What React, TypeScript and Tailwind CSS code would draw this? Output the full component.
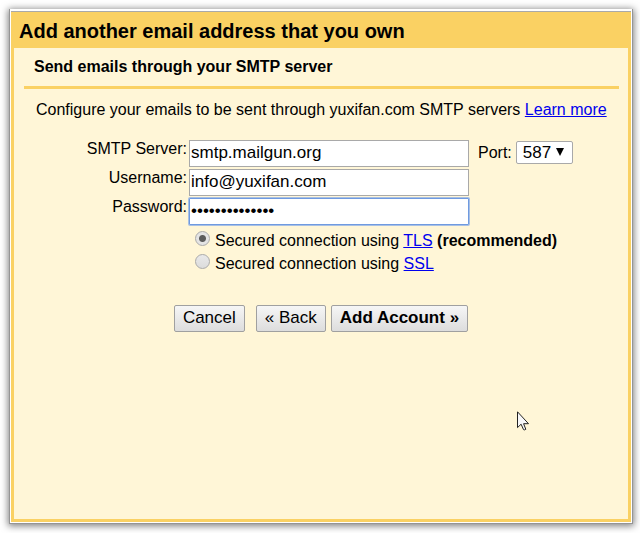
import { useState } from "react";

const buttonClass =
  "h-[27px] rounded-[2px] border border-[#a0a0a0] bg-gradient-to-b from-[#f6f6f6] to-[#dddddd] px-2 pb-px text-[17px] leading-5";
const inputClass = "h-[27px] w-full min-w-0 border bg-white px-px pb-px text-[17px] outline-none";
const linkClass = "text-[#0000ee] underline";
const radioClass =
  "size-[15px] shrink-0 appearance-none rounded-full border border-[#aaaaaa] bg-gradient-to-b from-[#e9e9e9] to-[#dcdcdc] checked:bg-[radial-gradient(circle,#5c5c5c_3px,#e4e4e4_4px)]";

export default function App() {
  const [server, setServer] = useState("smtp.mailgun.org");
  const [username, setUsername] = useState("info@yuxifan.com");
  const [password, setPassword] = useState("mailgunsecret1");
  const [security, setSecurity] = useState("tls");

  return (
    <div className="flex min-h-screen flex-col bg-white pt-[9px] pr-[7px] pb-[9px] pl-[9px] font-['Liberation_Sans',Arial,sans-serif] text-base text-black">
      <div className="flex grow flex-col border-x border-b border-[#959595] bg-white pt-[2px] pb-px shadow-[0_1px_7px_1px_rgba(0,0,0,0.5)]">
        <main className="mr-px ml-px flex grow flex-col border-t border-[#a9a9a9] bg-[#fad163] px-[3px] pb-[3px]">
          <h1 className="h-9 pt-[5px] pl-[5px] text-xl leading-7 font-bold">
            Add another email address that you own
          </h1>
          <form className="grow bg-[#fff6d7] pb-4" onSubmit={(e) => e.preventDefault()}>
            <h2 className="mr-[9px] ml-[10px] h-[41px] border-b-3 border-[#fad163] pt-[9px] pl-[10px] leading-5 font-bold">
              Send emails through your SMTP server
            </h2>
            <p className="pt-[11px] pl-[22px] leading-5">
              Configure your emails to be sent through yuxifan.com SMTP servers{" "}
              <a href="#learn-more" className={linkClass}>Learn more</a>
            </p>

            <div className="mt-5 grid grid-cols-[173px_280px_auto] justify-start gap-x-[2px] gap-y-[2px]">
              <label htmlFor="server" className="text-right leading-[18px]">SMTP Server:</label>
              <input
                id="server"
                className={`${inputClass} border-[#a9a9a9]`}
                value={server}
                onChange={(e) => setServer(e.target.value)}
              />
              <div className="flex items-center gap-1 pb-[2px] pl-[7px]">
                <label htmlFor="port">Port:</label>
                <div className="relative">
                  <select
                    id="port"
                    defaultValue="587"
                    className="block h-[23px] w-[57px] appearance-none rounded-[2px] border border-[#a9a9a9] bg-white pl-[6px] text-[17px] leading-5"
                  >
                    <option>25</option>
                    <option>465</option>
                    <option>587</option>
                  </select>
                  <svg
                    className="pointer-events-none absolute top-[7px] right-[9px] size-2"
                    viewBox="0 0 8 8"
                    aria-hidden="true"
                  >
                    <path d="M0 0h8L4 8z" />
                  </svg>
                </div>
              </div>

              <label htmlFor="username" className="text-right leading-[18px]">Username:</label>
              <input
                id="username"
                className={`${inputClass} border-[#a9a9a9]`}
                value={username}
                onChange={(e) => setUsername(e.target.value)}
              />
              <span />

              <label htmlFor="password" className="text-right leading-[18px]">Password:</label>
              <input
                id="password"
                type="password"
                className={`${inputClass} rounded-[1px] border-[#6f9ae0] shadow-[0_0_0_1px_#a8c0e4]`}
                value={password}
                onChange={(e) => setPassword(e.target.value)}
              />
            </div>

            <div className="mt-1 pl-[181px] leading-[23px]">
              <div className="flex gap-[5px]">
                <input
                  id="tls"
                  type="radio"
                  name="security"
                  className={`${radioClass} mt-[2px]`}
                  checked={security === "tls"}
                  onChange={() => setSecurity("tls")}
                />
                <label htmlFor="tls">
                  Secured connection using <a href="#tls" className={linkClass}>TLS</a>{" "}
                  <b>(recommended)</b>
                </label>
              </div>
              <div className="flex gap-[5px]">
                <input
                  id="ssl"
                  type="radio"
                  name="security"
                  className={`${radioClass} mt-[2px]`}
                  checked={security === "ssl"}
                  onChange={() => setSecurity("ssl")}
                />
                <label htmlFor="ssl">
                  Secured connection using <a href="#ssl" className={linkClass}>SSL</a>
                </label>
              </div>
            </div>

            <div className="mt-[30px] flex justify-center">
              <button type="button" className={`${buttonClass} mr-[11px]`}>Cancel</button>
              <button type="button" className={`${buttonClass} mr-[5px]`}>« Back</button>
              <button type="submit" className={`${buttonClass} font-bold`}>Add Account »</button>
            </div>
          </form>
        </main>
      </div>

      <svg
        className="pointer-events-none absolute top-[411px] left-[517px] h-5 w-3"
        viewBox="0 0 12 20"
        aria-hidden="true"
      >
        <path
          d="M.5.8v15.8l3.6-3.4 2.4 5.4q1 .7 2.3-.3l-2.2-5.6h4.9z"
          fill="#f8f8fa"
          stroke="#222"
          strokeWidth="1"
        />
      </svg>
    </div>
  );
}
